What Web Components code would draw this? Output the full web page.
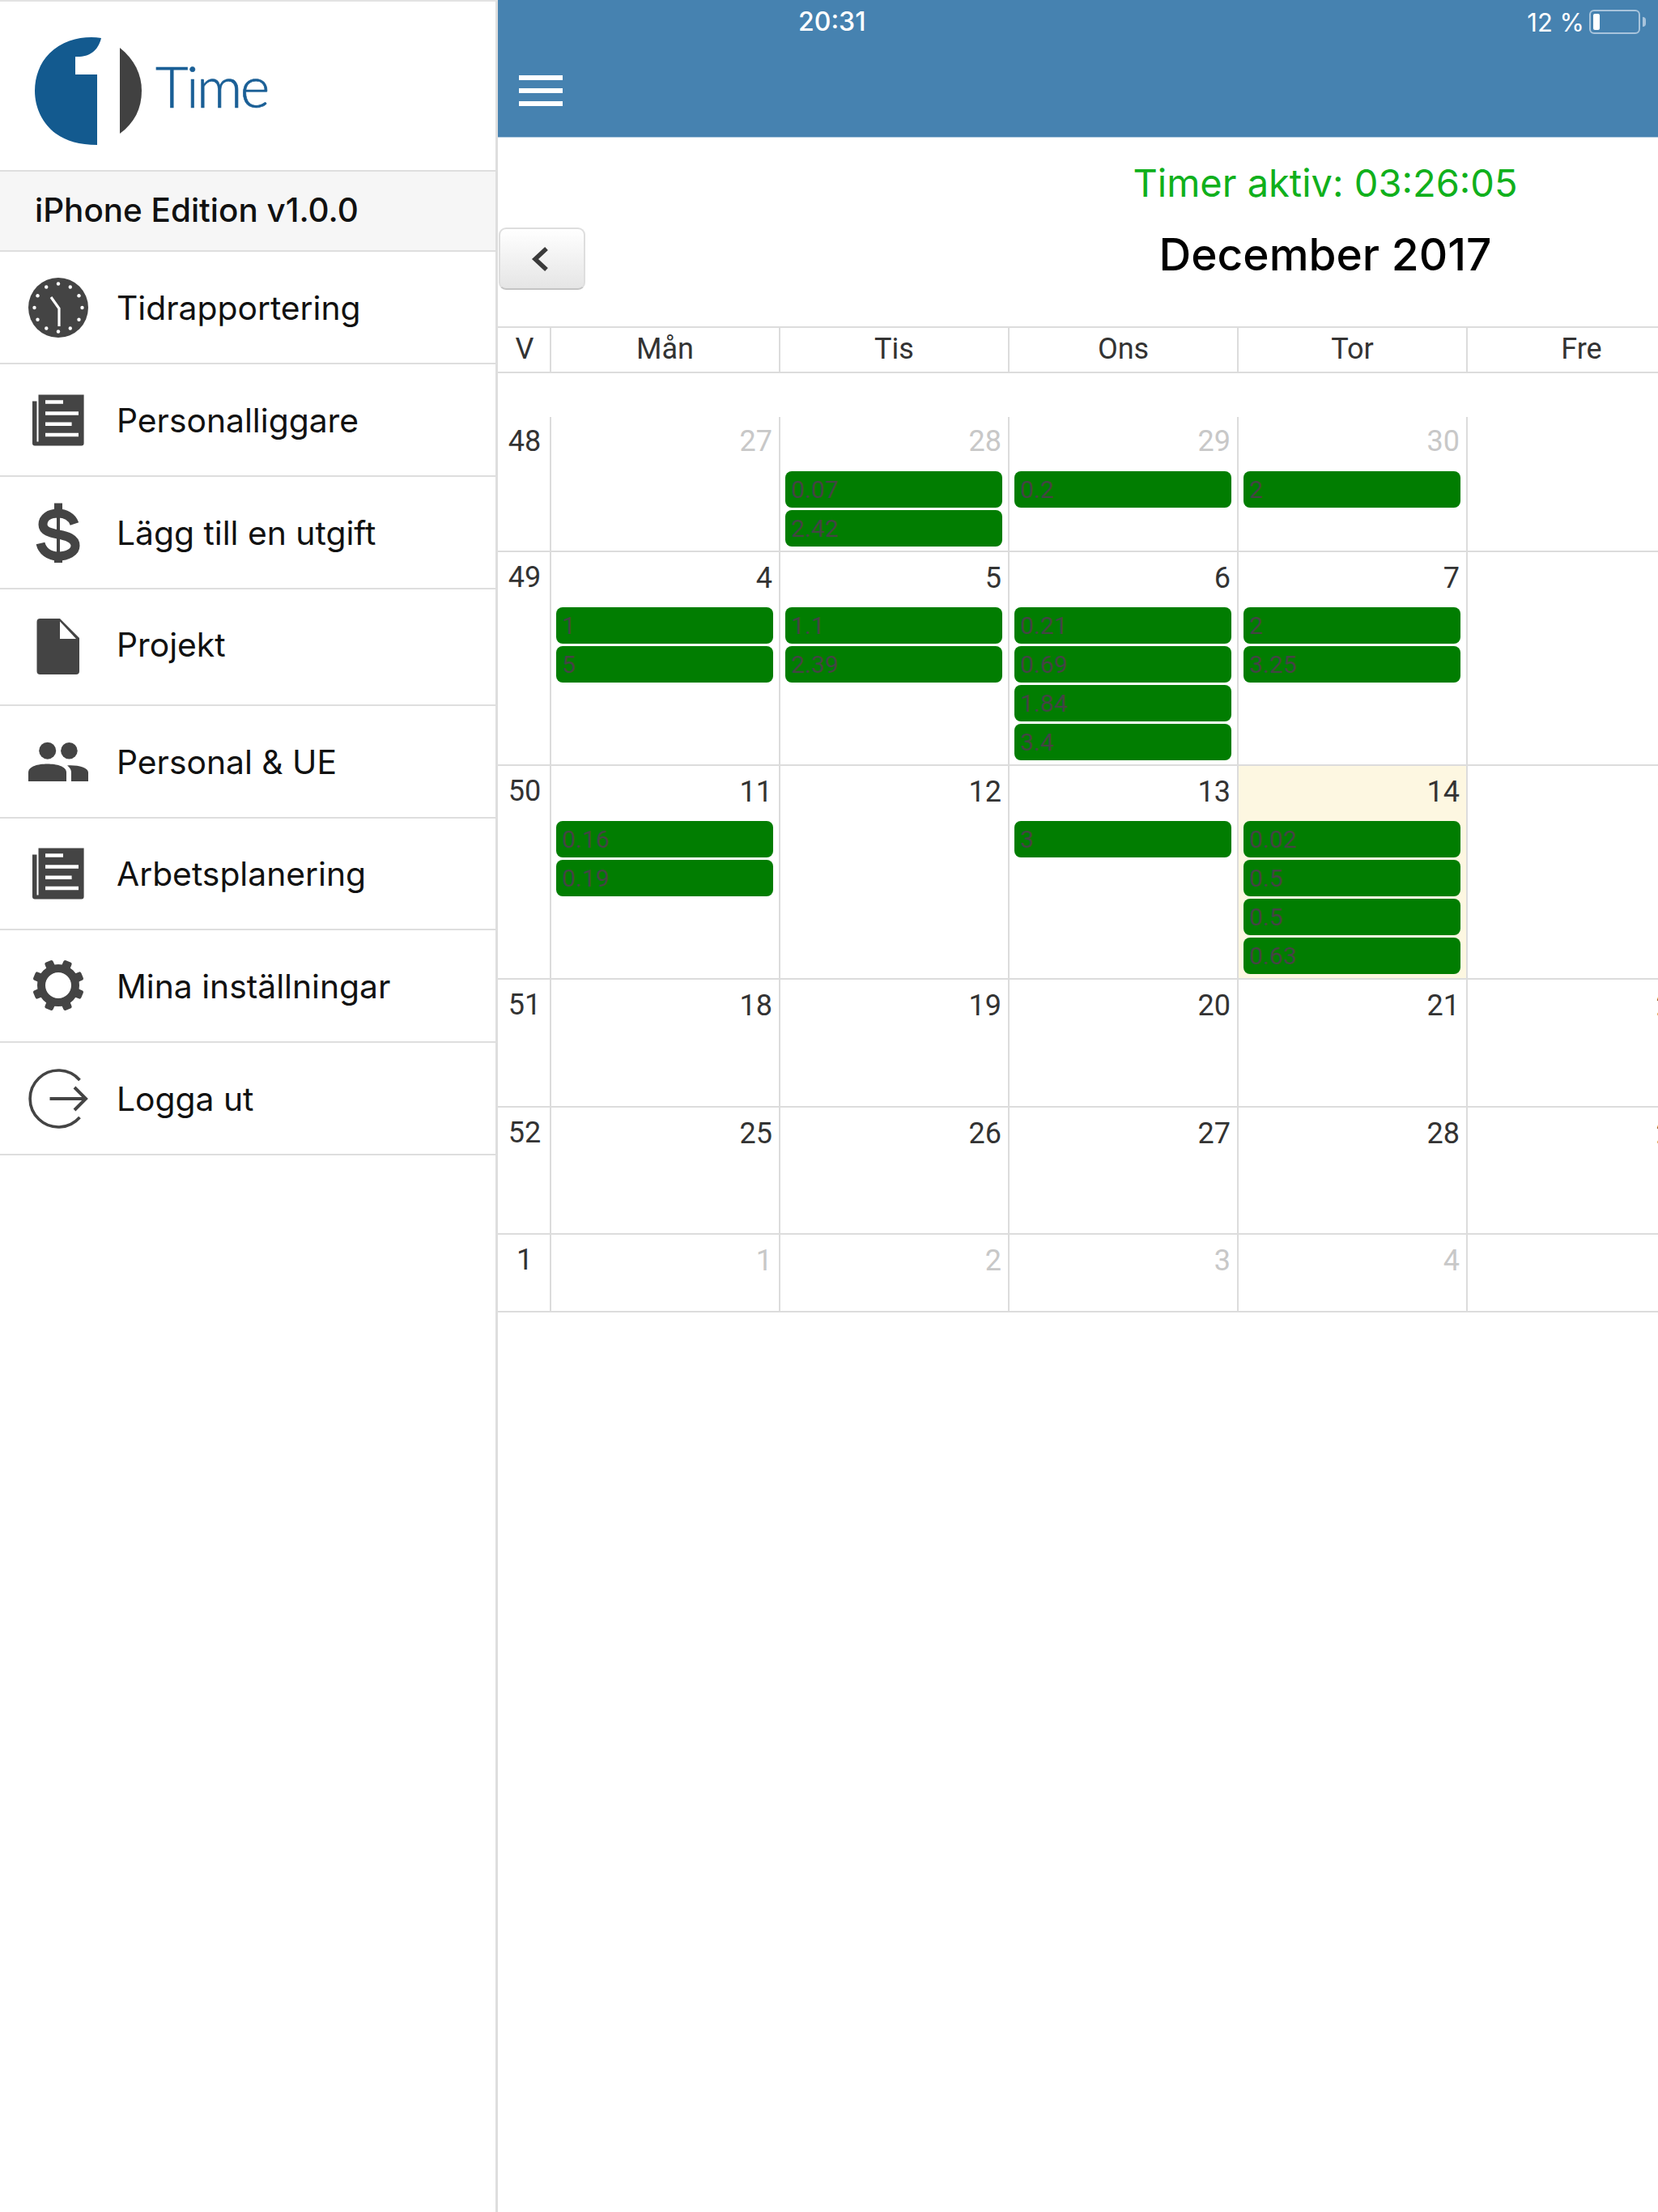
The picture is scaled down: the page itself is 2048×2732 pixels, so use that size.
<!DOCTYPE html>
<html lang="sv">
<head>
<meta charset="utf-8">
<title>1Time</title>
<style>
  html, body { margin: 0; padding: 0; background: #fff; }
  body { width: 2048px; height: 2732px; overflow: hidden; font-family: Roboto, "Liberation Sans", sans-serif; }
</style>
</head>
<body>
<time-app>
  <side-menu slot="side">
    <nav-item label="Tidrapportering" icon="clock" h="139"></nav-item>
    <nav-item label="Personalliggare" icon="news" h="139"></nav-item>
    <nav-item label="Lägg till en utgift" icon="dollar" h="139"></nav-item>
    <nav-item label="Projekt" icon="file" h="144" raised></nav-item>
    <nav-item label="Personal &amp; UE" icon="users" h="139"></nav-item>
    <nav-item label="Arbetsplanering" icon="news" h="138"></nav-item>
    <nav-item label="Mina inställningar" icon="gear" h="139"></nav-item>
    <nav-item label="Logga ut" icon="logout" h="139"></nav-item>
  </side-menu>
  <top-bar slot="top"></top-bar>
  <month-head slot="main"></month-head>
  <month-grid slot="main"></month-grid>
</time-app>

<script>
const ICONS = {
  clock: () => {
    let dots = '';
    for (let i = 0; i < 12; i++) {
      const a = i * Math.PI / 6;
      dots += `<circle cx="${(37 + 29.5 * Math.sin(a)).toFixed(1)}" cy="${(37 - 29.5 * Math.cos(a)).toFixed(1)}" r="2.2" fill="#fff"/>`;
    }
    return `<circle cx="37" cy="37" r="37" fill="#444"/>${dots}
      <path d="M28 24 L38 38 V60" fill="none" stroke="#fff" stroke-width="3.2"/>`;
  },
  news: () => `<path fill="#444" d="M12.5 5.5H68.6V65.5a3 3 0 0 1-3 3H8a3 3 0 0 1-3-3V13.5h5.5V63.5h2z"/>
      <path fill="#fff" d="M21 12.2h22v4.5H21zM21 26.2h41v4.5H21zM21 39.5h32.6V44H21zM21 52.8h41v4.5H21z"/>`,
  dollar: () => `<path d="M32 .5h10V14H32zM32 62h10v12H32zM35 10h4v54h-4z" fill="#444"/>
      <path d="M57 26C54 17 45 13 37 13 26 13 18 18 18 27 18 35 27 37 37 39 48 41 58 44 58 53 58 61 48 66 37 66 25 66 17 59 15 50" fill="none" stroke="#444" stroke-width="11"/>`,
  file: () => `<path fill="#444" d="M14.5 2H39L63 26V67a4 4 0 0 1-4 4H14.5a4 4 0 0 1-4-4V6a4 4 0 0 1 4-4z"/>
      <path fill="#fff" d="M39 5.5V27H59z"/>`,
  users: () => `<g fill="#444"><circle cx="23.7" cy="23.2" r="10.5"/><circle cx="50.4" cy="23.2" r="10.3"/>
      <path d="M0 61V50C0 42.5 12 39.5 23.5 39.5S47 42.5 47 50V61z"/>
      <path d="M53 61V50C53 46 50.5 43.5 48 41.5 60 40.5 74 44 74 50V61z"/></g>`,
  gear: () => {
    let teeth = '';
    for (let i = 0; i < 8; i++) {
      teeth += `<rect x="-5.5" y="-32" width="11" height="10" rx="2.5" transform="rotate(${22.5 + i * 45})"/>`;
    }
    return `<g transform="translate(37 36)" fill="#444"><circle r="21" fill="none" stroke="#444" stroke-width="10"/>${teeth}</g>`;
  },
  logout: () => `<g fill="none" stroke="#444" stroke-width="3.6"><path d="M63.5 14A35 35 0 1 0 63.5 60"/>
      <path d="M26.5 37H70" stroke-width="4"/><path d="M57 23L71 37L57 51" stroke-width="4"/></g>`,
};

const appTpl = document.createElement('template');
appTpl.innerHTML = `
  <style>
    :host { display: flex; width: 2048px; height: 2732px; overflow: hidden; color: #333; }
    .side { flex: 0 0 612px; }
    .right { flex: 1; min-width: 0; overflow: hidden; }
    .inner { width: 2044px; }
  </style>
  <div class="side"><slot name="side"></slot></div>
  <div class="right">
    <slot name="top"></slot>
    <div class="inner"><slot name="main"></slot></div>
  </div>`;

class TimeApp extends HTMLElement {
  constructor() {
    super();
    this.attachShadow({ mode: 'open' }).appendChild(appTpl.content.cloneNode(true));
  }
}

class SideMenu extends HTMLElement {
  constructor() {
    super();
    this.attachShadow({ mode: 'open' }).innerHTML = `
      <style>
        :host { display: block; box-sizing: border-box; width: 615px; height: 2732px; background: #fff;
          border-right: 3px solid #dedede; border-top: 2px solid #e2e2e2; }
        .logo { box-sizing: border-box; height: 210px; border-bottom: 2px solid #dedede; display: flex; align-items: flex-start; }
        svg { display: block; margin: 44px 0 0 43px; flex: none; }
        .word { font: 300 70px/1 Lato, sans-serif; -webkit-text-stroke: .7px #1a5f96; color: #1a5f96; letter-spacing: -2.5px; margin: 69px 0 0 16px; }
        .edition { box-sizing: border-box; height: 99px; background: #f6f6f6; border-bottom: 2px solid #dedede;
          font: 550 40.4px/96px Inter, Roboto, sans-serif; color: #111; padding-left: 43px; }
      </style>
      <div class="logo">
        <svg width="133" height="134" viewBox="0 0 133 134">
          <path fill="#135a8f" d="M82 1C62-2 36 2 18 20 6 32 0 49 0 66c0 22 10 41 26 53 13 9 29 14 51 14V46H50V24C66 25 78 18 82 1z"/>
          <path fill="#414141" d="M105 13c18 14 27 33 27 53 0 22-9 40-27 53z"/>
        </svg>
        <span class="word">Time</span>
      </div>
      <div class="edition">iPhone Edition v1.0.0</div>
      <slot></slot>`;
  }
}

class NavItem extends HTMLElement {
  connectedCallback() {
    if (this.shadowRoot) return;
    this.attachShadow({ mode: 'open' }).innerHTML = `
      <style>
        :host { display: flex; box-sizing: border-box; height: ${this.getAttribute('h')}px; align-items: center; gap: 35px;
          padding-left: 35px; border-bottom: 2px solid #dedede; }
        svg { flex: none; display: block; }
        span { font: 400 40.8px/1 Inter, Roboto, sans-serif; color: #111; padding-top: 1px; }
        :host([raised]) span { padding: 0 0 6px; }
      </style>
      <svg width="74" height="74" viewBox="0 0 74 74">${ICONS[this.getAttribute('icon')]()}</svg>
      <span>${this.getAttribute('label').replace('&', '&amp;')}</span>`;
  }
}

class TopBar extends HTMLElement {
  constructor() {
    super();
    this.attachShadow({ mode: 'open' }).innerHTML = `
      <style>
        :host { display: block; box-sizing: border-box; height: 170px; background: #4682b0; border-bottom: 1px solid #a9c6dd;
          color: #fff; font: 400 31px/1 Inter, Roboto, sans-serif; }
        .status { display: flex; align-items: center; height: 54px; padding: 0 15px 0 371px; }
        .time { font-size: 32px; font-weight: 500; }
        .batt { margin-left: auto; display: flex; align-items: center; gap: 6px; }
        .cell { box-sizing: border-box; width: 63px; height: 30px; border: 2px solid #a8c4dc; border-radius: 6px; padding: 3px; }
        .cell i { display: block; width: 8px; height: 100%; background: #fff; border-radius: 2px; }
        .nub { width: 4px; height: 12px; background: #a8c4dc; border-radius: 0 4px 4px 0; margin-left: -3px; }
        .burger { display: flex; flex-direction: column; gap: 10px; width: 54px; margin: 39px 0 0 26px; }
        .burger i { display: block; height: 6px; background: #fff; }
      </style>
      <div class="status">
        <span class="time">20:31</span>
        <span class="batt"><span>12 %</span><span class="cell"><i></i></span><span class="nub"></span></span>
      </div>
      <div class="burger"><i></i><i></i><i></i></div>`;
  }
}

class MonthHead extends HTMLElement {
  constructor() {
    super();
    this.attachShadow({ mode: 'open' }).innerHTML = `
      <style>
        :host { display: block; height: 233px; position: relative; text-align: center; }
        .timer { font: 400 47px/1 Inter, Roboto, sans-serif; color: #10b01c; padding-top: 32px; }
        h1 { margin: 0; font: 500 55px/1 Inter, Roboto, sans-serif; color: #000; padding-top: 38px; }
        button { position: absolute; left: 1px; top: 111px; width: 107px; height: 77px; padding: 0 3px 0 0; background: linear-gradient(#fff, #e5e5e5);
          border: 2px solid #dedede; border-bottom-color: #c4c4c4; border-radius: 9px; display: flex; align-items: center; justify-content: center; }
        svg { display: block; }
      </style>
      <div class="timer">Timer aktiv: 03:26:05</div>
      <h1>December 2017</h1>
      <button aria-label="Föregående"><svg width="24" height="32" viewBox="0 0 24 32"><path d="M19 3L5 16L19 29" fill="none" stroke="#3a3a3a" stroke-width="5.5"/></svg></button>`;
  }
}

// grey = day of another month, today = highlighted cell, '' in a Fre cell = number is past the screen edge
const WEEKS = [
  { no: 48, h: 167, first: true, days: [[27, 'grey', []], [28, 'grey', ['0.07', '2.42']], [29, 'grey', ['0.2']], [30, 'grey', ['2']], ['', '', []]] },
  { no: 49, h: 264, days: [[4, '', ['1', '5']], [5, '', ['1.1', '2.39']], [6, '', ['0.21', '0.69', '1.84', '3.4']], [7, '', ['2', '3.25']], ['', '', []]] },
  { no: 50, h: 264, days: [[11, '', ['0.16', '0.19']], [12, '', []], [13, '', ['3']], [14, 'today', ['0.02', '0.5', '0.5', '0.63']], [15, '', []]] },
  { no: 51, h: 158, days: [[18, '', []], [19, '', []], [20, '', []], [21, '', []], [22, '', []]] },
  { no: 52, h: 157, days: [[25, '', []], [26, '', []], [27, '', []], [28, '', []], [29, '', []]] },
  { no: 1, h: 96, days: [[1, 'grey', []], [2, 'grey', []], [3, 'grey', []], [4, 'grey', []], ['', 'grey', []]] },
];

class DayCell extends HTMLElement {
  connectedCallback() {
    if (this.shadowRoot) return;
    const hours = (this.getAttribute('hours') || '').split(',').filter(Boolean);
    this.attachShadow({ mode: 'open' }).innerHTML = `
      <style>
        :host { display: block; box-sizing: border-box; border-left: 2px solid #dcdcdc; padding: 7px 7px 0 6px; min-width: 0; overflow: hidden; }
        :host([first]) { padding-top: 5px; }
        :host([first]) .no { margin-bottom: 12px; }
        :host([kind="today"]) { background: #fdf7e1; }
        .no { height: 50px; font: 400 36px/50px Roboto, sans-serif; color: #333; text-align: right; padding-right: 1px; margin-bottom: 11px; }
        :host([kind="grey"]) .no { color: #c8c8c8; }
        .bar { height: 45px; margin-bottom: 3px; background: #017d01; border-radius: 8px; padding-left: 7px;
          font: 400 30px/45px Roboto, sans-serif; color: #444; }
      </style>
      <div class="no"><slot></slot></div>
      ${hours.map(h => `<div class="bar">${h}</div>`).join('')}`;
  }
}

class MonthGrid extends HTMLElement {
  constructor() {
    super();
    const cols = '64px repeat(5, 283px) 1fr';
    const rows = WEEKS.map(w => `
      <div class="row${w.first ? ' first' : ''}" style="height:${w.h}px">
        <div class="week">${w.no}</div>
        ${w.days.map(([d, kind, hours]) => `<day-cell kind="${kind}" hours="${hours.join(',')}"${w.first ? ' first' : ''}>${d}</day-cell>`).join('')}
      </div>`).join('');
    this.attachShadow({ mode: 'open' }).innerHTML = `
      <style>
        :host { display: block; }
        .head, .row { display: grid; grid-template-columns: ${cols}; box-sizing: border-box; }
        .head { height: 58px; border-top: 2px solid #dcdcdc; border-bottom: 2px solid #dcdcdc; margin-bottom: 54px; }
        .head div { font: 400 36px/52px Roboto, sans-serif; color: #333; text-align: center; border-left: 2px solid #dcdcdc; }
        .head div:first-child, .week { border-left: 0; }
        .head div:first-child { padding-left: 2px; }
        .row { border-bottom: 2px solid #dcdcdc; }
        .week { font: 400 36px/50px Roboto, sans-serif; color: #333; text-align: center; padding: 6px 0 0 2px; }
        .row.first .week { padding-top: 5px; }
      </style>
      <div class="head"><div>V</div><div>Mån</div><div>Tis</div><div>Ons</div><div>Tor</div><div>Fre</div></div>
      ${rows}`;
  }
}

customElements.define('time-app', TimeApp);
customElements.define('side-menu', SideMenu);
customElements.define('nav-item', NavItem);
customElements.define('top-bar', TopBar);
customElements.define('month-head', MonthHead);
customElements.define('day-cell', DayCell);
customElements.define('month-grid', MonthGrid);
</script>
</body>
</html>
